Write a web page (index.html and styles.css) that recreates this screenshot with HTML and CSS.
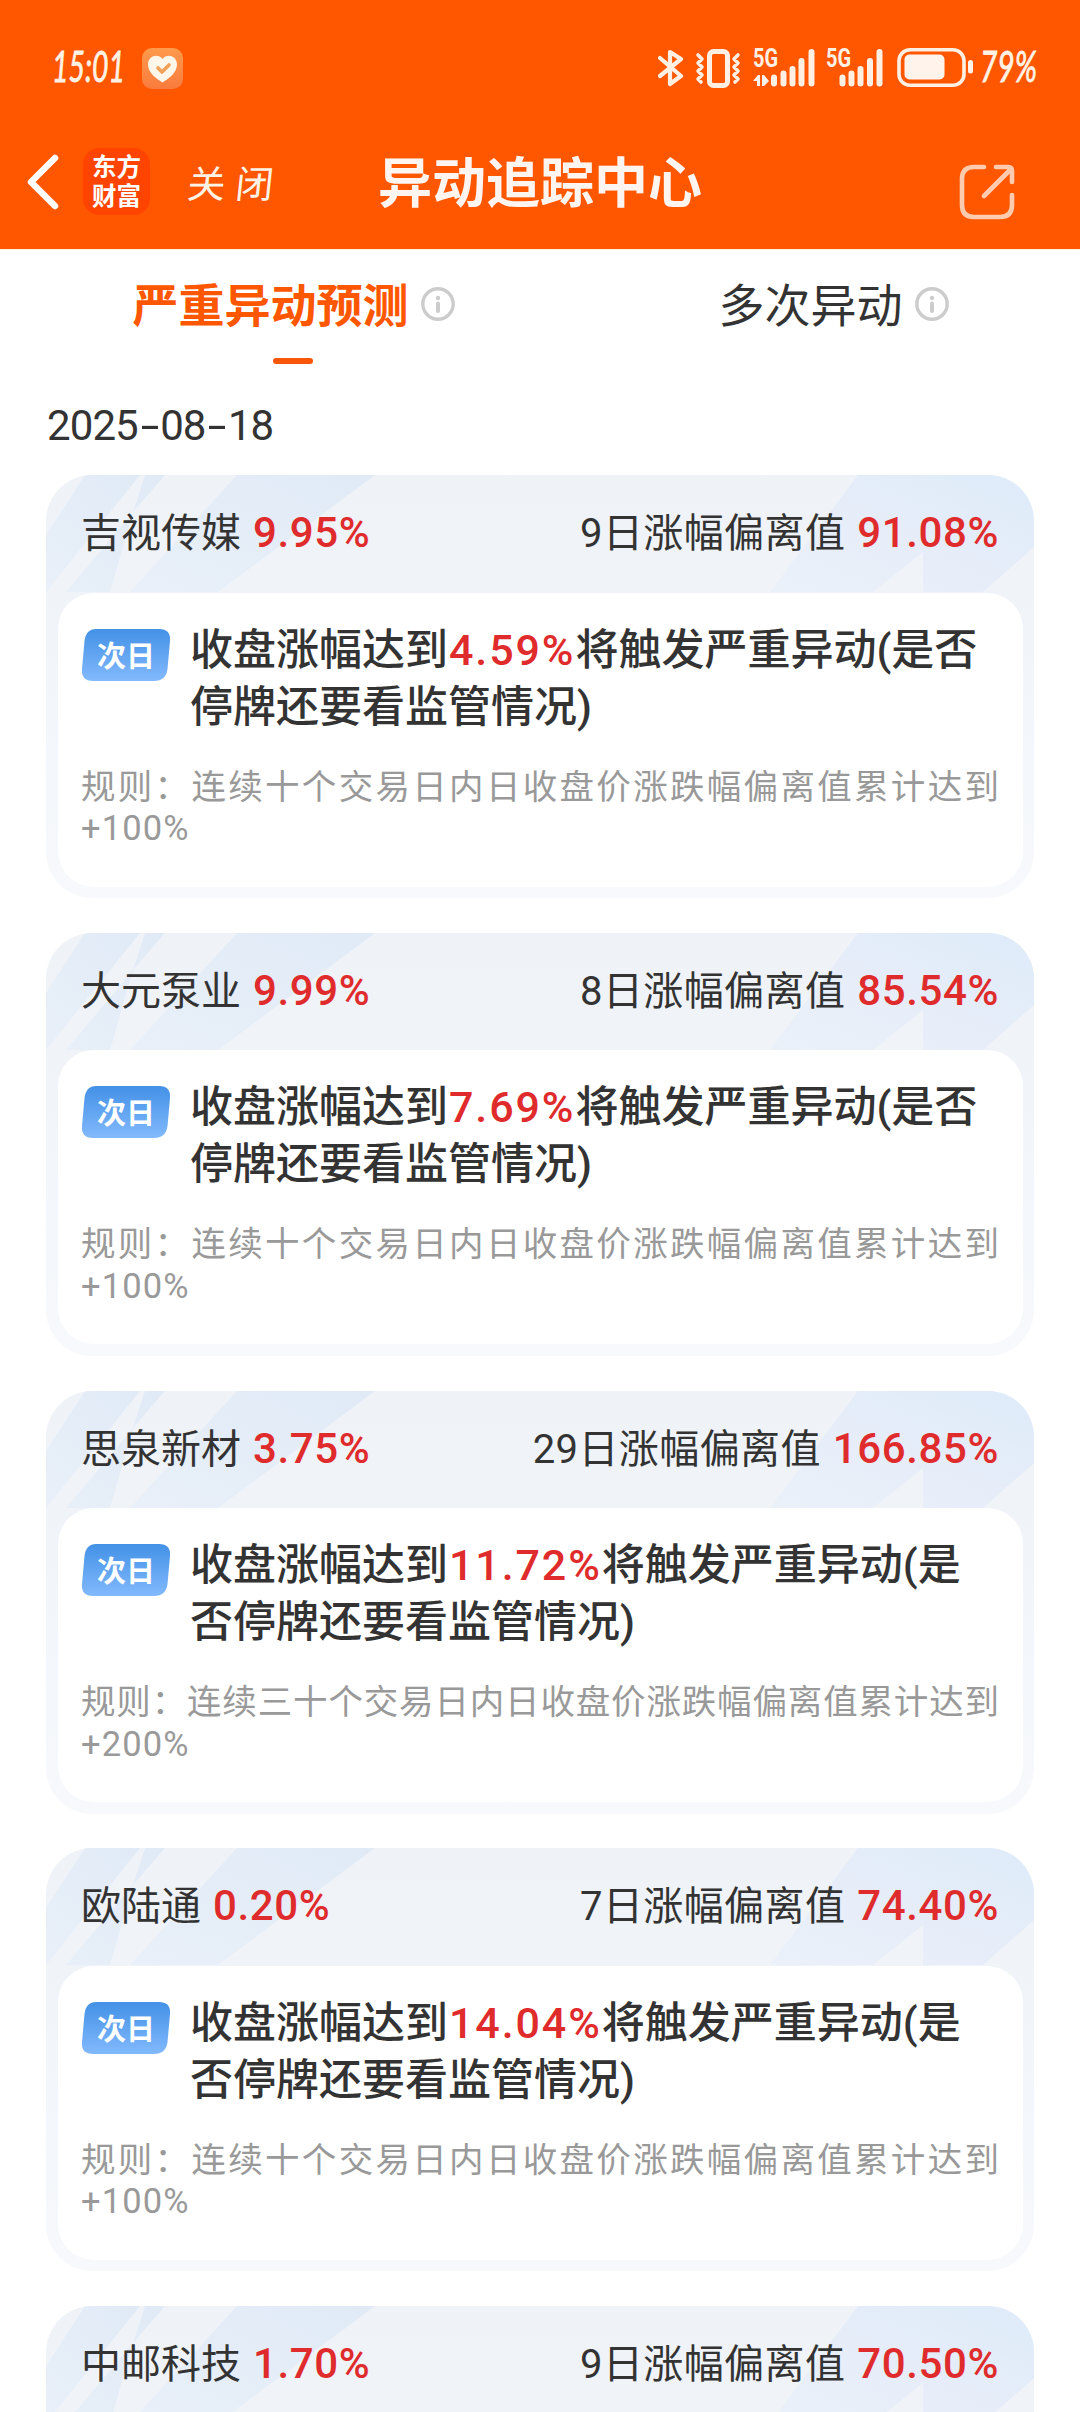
FILE: index.html
```html
<!DOCTYPE html>
<html lang="zh-CN">
<head>
<meta charset="utf-8">
<title>异动追踪中心</title>
<link rel="stylesheet" href="styles.css">
</head>
<body>
<svg class="defs" width="0" height="0" aria-hidden="true">
  <defs>
    <linearGradient id="bandA" x1="1" y1="0" x2="0" y2="1">
      <stop offset="0" stop-color="#e0eaf6"/><stop offset="1" stop-color="#e9f0f9"/>
    </linearGradient>
    <linearGradient id="bandB" x1="1" y1="0" x2="0" y2="1">
      <stop offset="0" stop-color="#deebf9"/><stop offset=".5" stop-color="#e6edf9"/><stop offset="1" stop-color="#ebf1f9"/>
    </linearGradient>
    <linearGradient id="badge" x1="0" y1="0" x2="0" y2="1">
      <stop offset="0" stop-color="#4391e6"/><stop offset="1" stop-color="#82b9fd"/>
    </linearGradient>
    <linearGradient id="heart" x1="0" y1="0" x2="0" y2="1">
      <stop offset="0" stop-color="#ff9a4c"/><stop offset="1" stop-color="#f97b3d"/>
    </linearGradient>
    <symbol id="bands" viewBox="0 0 988 200">
      <path fill="url(#bandA)" d="M39 0H94L0 117V60Z"/>
      <path fill="url(#bandA)" d="M99 0H119L87 37ZM87 37L64 117H20L0 141Z"/>
      <path fill="url(#bandA)" d="M191 0H329L172 117H84Z"/>
      <path fill="url(#bandB)" d="M812 0H988V72L937 117H877V77L827 117H724Z"/>
    </symbol>
    <symbol id="tag" viewBox="0 0 90 52">
      <path fill="url(#badge)" d="M15 0H78Q90 0 89 12L86.500 40Q85 52 73 52H12Q0 52 1 40L3.500 12Q5 0 15 0Z"/>
    </symbol>
    <symbol id="info" viewBox="0 0 34 34">
      <circle cx="17" cy="17" r="15.200" fill="none" stroke="#ccc" stroke-width="3.400"/>
      <circle cx="17" cy="11" r="2.200" fill="#ccc"/>
      <path d="M17 16.500V24" stroke="#ccc" stroke-width="4" stroke-linecap="round"/>
    </symbol>
  </defs>
</svg>

<div class="page">
  <header class="header">
    <div class="status">
      <svg class="clock" width="78" height="56" viewBox="0 -8 78 56"><text x="0" y="34" textLength="73" lengthAdjust="spacingAndGlyphs">15:01</text></svg>
      <svg class="health" width="41" height="41" viewBox="0 0 41 41">
        <rect width="41" height="41" rx="10" fill="url(#heart)"/>
        <path fill="#fff6ea" d="M20.500 34.500C15 31 6 25 6 16.500C6 8 16 5 20.500 11C25 5 35 8 35 16.500C35 25 26 31 20.500 34.500Z"/>
        <path fill="none" stroke="#f2a258" stroke-width="3.600" stroke-linecap="round" stroke-linejoin="round" d="M16 20L20 24L27 17"/>
      </svg>
      <svg class="bt" width="26" height="40" viewBox="0 0 26 40">
        <path class="line" stroke-width="4.200" d="M2 10L23 28L12 36V4L23 11L2 28"/>
      </svg>
      <svg class="vib" width="46" height="42" viewBox="0 0 46 42">
        <rect class="line" stroke-width="5" x="14.500" y="3.500" width="18" height="34" rx="4"/>
        <path class="line" stroke-width="3.600" d="M3 7L7 11L3 15L7 19L3 23L7 27L3 31L6 34M43 7L39 11L43 15L39 19L43 23L39 27L43 31L40 34"/>
      </svg>
      <svg class="sig" width="62" height="48" viewBox="0 -8 62 48">
        <text x="0" y="19" textLength="25" lengthAdjust="spacingAndGlyphs">5G</text>
        <path class="solid" d="M0 33L5 27H7V38H4V33ZM9 27H11L16 33L11 38H9Z"/>
        <path class="bars" d="M21 29.500V35.500M30.500 25.500V35.500M39.500 21V35.500M48.500 13V35.500M58.500 4V35.500"/>
      </svg>
      <svg class="sig sig2" width="57" height="48" viewBox="0 -8 57 48">
        <text x="0" y="19" textLength="25" lengthAdjust="spacingAndGlyphs">5G</text>
        <path class="bars" d="M16.500 29.500V35.500M25.500 25.500V35.500M34.500 21V35.500M44 13V35.500M53.500 4V35.500"/>
      </svg>
      <svg class="bat" width="76" height="40" viewBox="0 0 76 40">
        <rect class="line" stroke-width="3.600" x="2" y="1.800" width="65" height="35.500" rx="11"/>
        <rect class="solid" x="7.500" y="6.500" width="40" height="25" rx="5"/>
        <rect class="solid" x="71" y="12" width="5" height="13.500" rx="2.500"/>
      </svg>
      <svg class="clock pct" width="62" height="56" viewBox="0 -8 62 56"><text x="0" y="34" textLength="57" lengthAdjust="spacingAndGlyphs">79%</text></svg>
    </div>
    <nav class="nav">
      <div class="nav-left">
        <svg width="32" height="56" viewBox="0 0 32 56"><path fill="none" stroke="#fff" stroke-width="6.500" stroke-linecap="round" stroke-linejoin="round" d="M28 4L4 28L28 52"/></svg>
        <div class="logo"><span>东方</span><span>财富</span></div>
        <span class="close">关闭</span>
      </div>
      <h1 class="title">异动追踪中心</h1>
      <svg class="share" width="56" height="56" viewBox="0 0 56 56">
        <path fill="none" stroke="#ffcbae" stroke-width="4.600" stroke-linecap="round" stroke-linejoin="round" d="M25 3H15Q3 3 3 15V41Q3 53 15 53H41Q53 53 53 41V31M37 3H49Q53 3 53 7V18M25 32L51 6"/>
      </svg>
    </nav>
  </header>

  <div class="tabs">
    <div class="tab active"><span>严重异动预测</span><svg width="34" height="34"><use href="#info"/></svg></div>
    <div class="tab"><span>多次异动</span><svg width="34" height="34"><use href="#info"/></svg></div>
  </div>

  <div class="date">2025<i>-</i>08<i>-</i>18</div>

  <main class="list">
    <section class="card">
      <svg class="bands" width="988" height="200"><use href="#bands"/></svg>
      <div class="head"><span>吉视传媒<b>9.95%</b></span><span class="dev">9日涨幅偏离值<b>91.08%</b></span></div>
      <div class="body">
        <div class="alert"><span class="tag"><svg width="90" height="52"><use href="#tag"/></svg><em>次日</em></span>
          <p>收盘涨幅达到<b>4.59%</b>将触发严重异动(是否<br>停牌还要看监管情况)</p></div>
        <p class="rule">规则：连续十个交易日内日收盘价涨跌幅偏离值累计达到 <span>+100%</span></p>
      </div>
    </section>
    <section class="card">
      <svg class="bands" width="988" height="200"><use href="#bands"/></svg>
      <div class="head"><span>大元泵业<b>9.99%</b></span><span class="dev">8日涨幅偏离值<b>85.54%</b></span></div>
      <div class="body">
        <div class="alert"><span class="tag"><svg width="90" height="52"><use href="#tag"/></svg><em>次日</em></span>
          <p>收盘涨幅达到<b>7.69%</b>将触发严重异动(是否<br>停牌还要看监管情况)</p></div>
        <p class="rule">规则：连续十个交易日内日收盘价涨跌幅偏离值累计达到 <span>+100%</span></p>
      </div>
    </section>
    <section class="card">
      <svg class="bands" width="988" height="200"><use href="#bands"/></svg>
      <div class="head"><span>思泉新材<b>3.75%</b></span><span class="dev">29日涨幅偏离值<b>166.85%</b></span></div>
      <div class="body">
        <div class="alert"><span class="tag"><svg width="90" height="52"><use href="#tag"/></svg><em>次日</em></span>
          <p>收盘涨幅达到<b>11.72%</b>将触发严重异动(是<br>否停牌还要看监管情况)</p></div>
        <p class="rule">规则：连续三十个交易日内日收盘价涨跌幅偏离值累计达到 <span>+200%</span></p>
      </div>
    </section>
    <section class="card">
      <svg class="bands" width="988" height="200"><use href="#bands"/></svg>
      <div class="head"><span>欧陆通<b>0.20%</b></span><span class="dev">7日涨幅偏离值<b>74.40%</b></span></div>
      <div class="body">
        <div class="alert"><span class="tag"><svg width="90" height="52"><use href="#tag"/></svg><em>次日</em></span>
          <p>收盘涨幅达到<b>14.04%</b>将触发严重异动(是<br>否停牌还要看监管情况)</p></div>
        <p class="rule">规则：连续十个交易日内日收盘价涨跌幅偏离值累计达到 <span>+100%</span></p>
      </div>
    </section>
    <section class="card">
      <svg class="bands" width="988" height="200"><use href="#bands"/></svg>
      <div class="head"><span>中邮科技<b>1.70%</b></span><span class="dev">9日涨幅偏离值<b>70.50%</b></span></div>
    </section>
  </main>
</div>
</body>
</html>
```
FILE: styles.css
```css
* { box-sizing: border-box; }
body, h1, p { margin: 0; }
body {
  background: #fff;
  color: #333;
  font-family: Roboto, "Noto Sans CJK SC", sans-serif;
}
b, i, em { font-style: normal; }
svg { display: block; flex: none; }
.defs { position: absolute; }
.page { width: 1080px; height: 2412px; overflow: hidden; }

.header {
  height: 250px;
  background: #ff5700;
  border-bottom: 1px solid #fff0e0;
}
.status {
  display: flex;
  height: 114px;
  padding: 48px 38px 0 52px;
}
.clock { margin-top: -8px; }
.clock text {
  font: italic 400 43px Lato, sans-serif;
  fill: #fff3e6;
  stroke: #fff3e6;
  stroke-width: .8;
}
.health { margin-left: 12px; }
.bt { margin-left: auto; }
.vib { margin-left: 11px; }
.sig { margin: -8px 0 0 12px; }
.sig2 { margin-left: 11px; }
.bat { margin-left: 14px; }
.pct { margin-left: 7px; }
.line { fill: none; stroke: #fff0e3; stroke-linecap: round; stroke-linejoin: round; }
.solid { fill: #fff3ec; }
.bars { stroke: #fff0e3; stroke-width: 6; stroke-linecap: round; }
.sig text { font: 700 25px Roboto, sans-serif; fill: #fff0e3; }

.nav {
  display: grid;
  grid-template-columns: 1fr auto 1fr;
  align-items: center;
  height: 135px;
  padding: 0 65px 0 27px;
}
.nav-left { display: flex; align-items: center; margin-right: -60px; }
.logo {
  display: flex;
  flex-direction: column;
  align-items: center;
  justify-content: center;
  width: 67px;
  height: 67px;
  margin-left: 24px;
  border-radius: 16px;
  background: #ff4400;
  color: #fff;
  font: 700 24.500px/29px Roboto, "Noto Sans CJK SC", sans-serif;
}
.close {
  margin-left: 38px;
  color: #fff3e6;
  font-size: 38px;
  font-weight: 400;
  letter-spacing: 10px;
  transform: skewX(-6deg);
}
.title {
  color: #fff5f0;
  font-size: 54px;
  line-height: 60px;
  font-weight: 700;
  margin: 6px 0 0 38px;
}
.share { justify-self: end; margin-top: 20px; }

.tabs { display: grid; grid-template-columns: 1fr 1fr; height: 114px; }
.tab {
  position: relative;
  display: flex;
  align-items: center;
  justify-content: center;
  gap: 12px;
  padding: 0 0 7px 47px;
  font-size: 46px;
}
.tab span { margin-top: -4px; }
.active { color: #ff5700; font-weight: 700; }
.active::after {
  content: "";
  position: absolute;
  left: 273px;
  bottom: 0;
  width: 40px;
  height: 6px;
  border-radius: 3px;
  background: #f9560a;
}
.date {
  height: 111px;
  padding: 37px 0 0 47px;
  font-size: 42px;
  line-height: 50px;
  letter-spacing: -.9px;
}
.date i { display: inline-block; margin: 0 5.800px; transform: scaleX(1.6); }

.list { display: flex; flex-direction: column; gap: 34.750px; padding: 0 46px; }
.card {
  position: relative;
  flex: none;
  height: 423px;
  padding: 0 11.500px 11.500px;
  overflow: hidden;
  border-radius: 46px;
  background: linear-gradient(#eff3f8, #f0f4f9 30%, #f7f9fc);
}
.bands { position: absolute; left: 0; top: 0; }
.head {
  position: relative;
  display: flex;
  justify-content: space-between;
  height: 117.500px;
  padding: 0 23.500px;
  font-size: 40px;
  line-height: 116px;
}
.head b { margin-left: 12px; font-size: 42px; letter-spacing: .6px; }
.dev { letter-spacing: .4px; }
b { color: #df2b2c; font-weight: 500; }
.body {
  position: relative;
  height: 294px;
  padding: 29px 23.500px 0;
  border-radius: 36px;
  background: #fff;
}
.alert { display: flex; font-size: 43px; line-height: 57px; font-weight: 500; white-space: nowrap; }
.alert b { margin-left: 1px; letter-spacing: 1.900px; }
.tag { position: relative; width: 90px; height: 52px; margin: 7px 19px 0 0; }
.tag em {
  position: absolute;
  inset: 0;
  color: #fff;
  font-size: 29px;
  line-height: 56px;
  font-weight: 700;
  text-align: center;
}
.rule {
  margin-top: 31px;
  color: #999;
  font-size: 34.500px;
  line-height: 41.500px;
  text-align: justify;
}
.rule span { letter-spacing: 1.100px; }
```
